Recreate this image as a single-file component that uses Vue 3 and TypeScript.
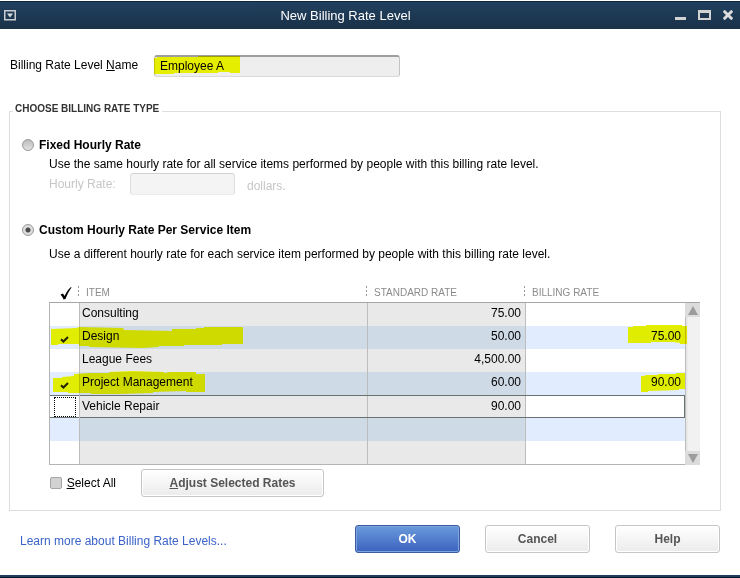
<script setup lang="ts">
import { ref } from 'vue'

interface ServiceItem {
  name: string
  standard: string
  billing: string
  checked: boolean
}

const levelName = ref('Employee A')
const rateType = ref<'fixed' | 'custom'>('custom')
const hourlyRate = ref('')
const selectAll = ref(false)
const focused = 'Vehicle Repair'

const items = ref<ServiceItem[]>([
  { name: 'Consulting', standard: '75.00', billing: '', checked: false },
  { name: 'Design', standard: '50.00', billing: '75.00', checked: true },
  { name: 'League Fees', standard: '4,500.00', billing: '', checked: false },
  { name: 'Project Management', standard: '60.00', billing: '90.00', checked: true },
  { name: 'Vehicle Repair', standard: '90.00', billing: '', checked: false },
])

// Marker strokes drawn over the selected rows, relative to the row's first and last cells
const itemMarks: Record<string, string> = {
  Design: '1,3 27,2 29,1 73,2 74,4 122,5 122,3 146,3 146,2 154,2 154,1 193,1 193,18 172,18 172,19 134,19 134,20 109,20 109,21 92,22 39,21 39,20 29,20 29,18 8,18 8,19 1,19',
  'Project Management': '3,6 12,6 12,5 24,4 24,2 40,1 59,1 59,0 82,-1 114,0 114,1 120,0 146,0 146,2 155,2 155,20 136,20 136,19 103,20 103,21 69,22 41,22 41,21 18,21 18,20 3,20',
}
const rateMarks: Record<string, string> = {
  Design: '4,1 9,1 9,0 22,0 22,-1 58,-1 58,0 63,0 63,18 56,18 56,17 49,16 27,16 27,17 4,17',
  'Project Management': '17,4 21,4 21,3 34,3 34,2 52,2 52,1 61,1 61,17 55,17 55,18 24,19 24,20 17,20',
}
</script>

<template>
  <div class="window">
    <header class="titlebar">
      <button class="tool" type="button" aria-label="Window menu">
        <svg width="12" height="11" viewBox="0 0 12 11">
          <rect x="0.75" y="0.75" width="10.5" height="9" fill="none" stroke="#c9cdd1" stroke-width="1.5" />
          <path d="M3 3.5h6L6 7.5z" fill="#dadde0" />
        </svg>
      </button>
      <h1>New Billing Rate Level</h1>
      <div class="tools">
        <button class="tool" type="button" aria-label="Minimize">
          <svg width="11" height="11" viewBox="0 0 11 11"><path d="M0 7h11v3H0z" fill="#d3d3d3" /></svg>
        </button>
        <button class="tool" type="button" aria-label="Maximize">
          <svg width="13" height="11" viewBox="0 0 13 11"><path d="M0 0h13v10H0zM2 3v5h9V3z" fill="#d3d3d3" fill-rule="evenodd" /></svg>
        </button>
        <button class="tool" type="button" aria-label="Close">
          <svg width="10" height="11" viewBox="0 0 10 11"><path d="M1.7 1.7l6.6 6.6M8.3 1.7L1.7 8.3" stroke="#dcdcdc" stroke-width="3" stroke-linecap="round" /></svg>
        </button>
      </div>
    </header>

    <form class="body" @submit.prevent>
      <div class="name-row">
        <label for="level-name">Billing Rate Level <u>N</u>ame</label>
        <div class="marked">
          <input id="level-name" v-model="levelName" class="field" type="text" />
          <svg class="mark" width="90" height="22" aria-hidden="true">
            <polygon points="0,3 3,3 3,2 44,2 44,1 86,1 86,18 76,18 76,17 64,17 64,18 20,18 20,19 0,19" />
          </svg>
        </div>
      </div>

      <fieldset class="group">
        <legend>CHOOSE BILLING RATE TYPE</legend>

        <label class="option">
          <input v-model="rateType" type="radio" name="rate-type" value="fixed" />
          Fixed Hourly Rate
        </label>
        <p class="hint">Use the same hourly rate for all service items performed by people with this billing rate level.</p>
        <div class="hourly">
          <label for="hourly-rate">Hourly Rate:</label>
          <input id="hourly-rate" v-model="hourlyRate" class="field" type="text" disabled />
          <span>dollars.</span>
        </div>

        <label class="option custom">
          <input v-model="rateType" type="radio" name="rate-type" value="custom" />
          Custom Hourly Rate Per Service Item
        </label>
        <p class="hint wide">Use a different hourly rate for each service item performed by people with this billing rate level.</p>

        <div class="grid">
          <table>
            <colgroup>
              <col class="c-check" />
              <col />
              <col class="c-std" />
              <col class="c-bill" />
            </colgroup>
            <thead>
              <tr>
                <th class="sep check-head" aria-label="Selected">
                  <svg width="12" height="13" viewBox="0 0 12 13"><path d="M0.5 7.5L3 6.5L4.5 9C6 6 8 2.5 11 0L11.5 0.5C9 4 7 8 5.5 12L3.5 12.5C2.8 10.5 1.8 9 0.5 7.5z" fill="#000" /></svg>
                </th>
                <th class="sep">ITEM</th>
                <th class="sep">STANDARD RATE</th>
                <th>BILLING RATE</th>
              </tr>
            </thead>
            <tbody>
              <tr v-for="item in items" :key="item.name" :class="{ focused: item.name === focused }">
                <td class="check">
                  <label class="tick">
                    <input v-model="item.checked" type="checkbox" :aria-label="item.name" />
                    <svg v-if="item.checked" width="9" height="7" viewBox="0 0 9 7"><path d="M1 3.2L3.4 5.5L8 1" fill="none" stroke="#222" stroke-width="2" /></svg>
                  </label>
                  <svg v-if="itemMarks[item.name]" class="mark" width="200" height="23" aria-hidden="true">
                    <polygon :points="itemMarks[item.name]" />
                  </svg>
                </td>
                <td class="fixed">{{ item.name }}</td>
                <td class="fixed num">{{ item.standard }}</td>
                <td class="bill">
                  <input v-model="item.billing" type="text" :aria-label="item.name + ' billing rate'" />
                  <svg v-if="rateMarks[item.name]" class="mark end" width="61" height="23" aria-hidden="true">
                    <polygon :points="rateMarks[item.name]" />
                  </svg>
                </td>
              </tr>
              <tr v-for="n in 2" :key="n">
                <td class="check"></td>
                <td class="fixed"></td>
                <td class="fixed"></td>
                <td class="bill"></td>
              </tr>
            </tbody>
          </table>
          <div class="scroll">
            <button type="button" aria-label="Scroll up">
              <svg width="10" height="9" viewBox="0 0 10 9"><path d="M5 0l5 9H0z" fill="#9c9c9c" /></svg>
            </button>
            <button type="button" aria-label="Scroll down">
              <svg width="10" height="9" viewBox="0 0 10 9"><path d="M0 0h10L5 9z" fill="#9c9c9c" /></svg>
            </button>
          </div>
        </div>

        <div class="actions">
          <label class="all">
            <input v-model="selectAll" type="checkbox" />
            <span><u>S</u>elect All</span>
          </label>
          <button class="btn adjust" type="button"><span><u>A</u>djust Selected Rates</span></button>
        </div>
      </fieldset>

      <footer class="footer">
        <a href="#">Learn more about Billing Rate Levels...</a>
        <div class="buttons">
          <button class="btn primary" type="submit">OK</button>
          <button class="btn" type="button">Cancel</button>
          <button class="btn" type="button">Help</button>
        </div>
      </footer>
    </form>
  </div>
</template>

<style>
body {
  background: #fff;
}
</style>

<style scoped>
.window {
  box-sizing: border-box;
  min-height: 100vh;
  display: flex;
  flex-direction: column;
  padding-top: 1px;
  border-bottom: 1px solid #04162a;
  font-family: "Liberation Sans", Arial, sans-serif;
  font-size: 12px;
  line-height: 16px;
  color: #000;
}
.window *,
.window *::before {
  box-sizing: border-box;
}
input,
button {
  margin: 0;
  font: inherit;
  color: inherit;
}
svg {
  display: block;
}

.titlebar {
  display: flex;
  align-items: center;
  height: 28px;
  padding: 0 7px 0 4px;
  border-top: 1px solid #0d2740;
  background: linear-gradient(#21405f, #1a3148);
  color: #fff;
}
.titlebar h1 {
  flex: 1;
  margin: 0;
  font-size: 13px;
  font-weight: 400;
  text-align: center;
}
.tools {
  display: flex;
  gap: 12px;
}
.tool {
  display: block;
  padding: 0;
  border: 0;
  background: none;
}

.body {
  flex: 1;
  display: flex;
  flex-direction: column;
  padding: 26px 19px 0 9px;
  border-bottom: 2px solid #1e3e5e;
}
.name-row {
  display: flex;
  align-items: center;
  gap: 12px;
  padding-left: 1px;
}
.name-row label {
  width: 132px;
  white-space: nowrap;
  padding-bottom: 2px;
}
.marked {
  position: relative;
  width: 246px;
}
.field {
  display: block;
  width: 100%;
  height: 22px;
  padding: 0 5px 2px;
  border: 1px solid #c4c4c4;
  border-top: 2px solid #9e9e9e;
  border-bottom-color: #dadada;
  border-radius: 3px;
  background: #eee;
}
.mark {
  position: absolute;
  top: 0;
  left: 0;
  overflow: visible;
  pointer-events: none;
  mix-blend-mode: darken;
  fill: #e6f000;
}
.mark.end {
  left: auto;
  right: 0;
}

.group {
  min-width: 0;
  margin: 26px 0 0;
  padding: 18px 20px 13px 12px;
  border: 1px solid #dedede;
}
.group legend {
  margin-left: -9px;
  padding: 0 3px 4px 2px;
  font-size: 10px;
  line-height: 12px;
  font-weight: 700;
  color: #333;
}
.option {
  display: flex;
  align-items: center;
  gap: 5px;
  font-weight: 700;
}
.option input {
  appearance: none;
  width: 12px;
  height: 12px;
  border: 1px solid #999;
  border-radius: 50%;
  background: linear-gradient(#bcbcbc, #e2e2e2);
}
.option input:checked {
  background: radial-gradient(circle, #4a4a4a 2px, #dcdcdc 3px);
}
.hint {
  margin: 3px 0 0 27px;
}
.hourly {
  display: flex;
  align-items: center;
  gap: 12px;
  margin: 1px 0 0 27px;
  color: #c6c6c6;
}
.hourly label {
  width: 69px;
}
.hourly .field {
  width: 105px;
  border-width: 1px;
  border-color: #d2d2d2 #dedede #ececec;
  background: #f4f4f4;
}
.hourly span {
  padding-top: 4px;
}
.custom {
  margin-top: 27px;
}
.hint.wide {
  margin-top: 8px;
}

.grid {
  display: flex;
  margin: 22px 0 0 27px;
}
table {
  flex: 1;
  min-width: 0;
  table-layout: fixed;
  border-spacing: 0;
}
.c-check {
  width: 31px;
}
.c-std {
  width: 158px;
}
.c-bill {
  width: 159px;
}
th {
  height: 19px;
  padding: 0 6px;
  border-bottom: 1px solid #a6a6a6;
  font-size: 10px;
  line-height: 16px;
  font-weight: 400;
  text-align: left;
  color: #8b8b8b;
}
.sep {
  background: repeating-linear-gradient(#999 0 2px, transparent 2px 4px) right 1px top 2px / 1px 10px no-repeat;
}
.check-head {
  padding: 1px 0 0 11px;
}
td {
  height: 23px;
  padding: 0 4px 3px 2px;
  border-right: 1px solid #bdbdbd;
  white-space: nowrap;
}
td.check {
  position: relative;
  padding: 0;
  border-left: 1px solid #b4b4b4;
  vertical-align: top;
}
td.bill {
  position: relative;
  padding: 0;
  border-right: 0;
  vertical-align: top;
}
.fixed {
  background: #e9e9e9;
}
.num {
  text-align: right;
}
tr:nth-child(even) td {
  background: #e1edfe;
}
tr:nth-child(even) td.fixed {
  background: #cfdae7;
}
tbody tr:last-child td {
  height: 24px;
  border-bottom: 1px solid #b4b4b4;
}
.focused {
  outline: 1px solid #697070;
  outline-offset: -1px;
}
.focused .fixed {
  padding-bottom: 1px;
}
.tick {
  display: grid;
  place-items: center;
  height: 22px;
}
.tick > * {
  grid-area: 1 / 1;
}
.tick svg {
  margin-top: 4px;
}
.tick input {
  appearance: none;
  width: 22px;
  height: 20px;
}
.focused .tick {
  height: 23px;
}
.focused .tick input {
  border: 1px dotted #000;
}
.bill input {
  display: block;
  width: 100%;
  height: 20px;
  padding: 0 4px;
  border: 0;
  background: none;
  text-align: right;
}
.scroll {
  display: flex;
  flex-direction: column;
  justify-content: space-between;
  width: 15px;
  margin-top: 18px;
  border-top: 1px solid #a6a6a6;
  background: linear-gradient(90deg, #bdbdbd 1px, #e4e4e4 1px 2px, #f1f1f1 3px);
}
.scroll button {
  display: grid;
  place-items: center;
  height: 14px;
  padding: 0;
  border: 0;
  background: #dcdcdc;
}

.actions {
  display: flex;
  align-items: center;
  gap: 25px;
  margin: 4px 0 0 28px;
}
.all {
  display: flex;
  align-items: center;
  gap: 5px;
  width: 66px;
  white-space: nowrap;
}
.all input {
  appearance: none;
  width: 12px;
  height: 12px;
  border: 1px solid #a5a5a5;
  border-radius: 2px;
  background: #d2d2d2;
}
.btn {
  width: 105px;
  height: 28px;
  padding: 0;
  border: 1px solid #c6c6c6;
  border-radius: 3px;
  background: linear-gradient(#fff, #ebebeb);
  box-shadow: inset 0 0 0 1px #fff;
  font-weight: 700;
  color: #555;
}
.adjust {
  width: 183px;
}
.primary {
  border-color: #3c5c9e;
  background: linear-gradient(#6a9adb, #3c62bf);
  box-shadow: inset 0 0 0 1px #7ba3e0;
  color: #fff;
}

.footer {
  display: flex;
  align-items: center;
  justify-content: space-between;
  margin: 14px 0 20px;
  padding: 0 1px 0 11px;
}
.footer a {
  padding-top: 3px;
  color: #3a62c8;
  text-decoration: none;
}
.buttons {
  display: flex;
  gap: 25px;
}
</style>
